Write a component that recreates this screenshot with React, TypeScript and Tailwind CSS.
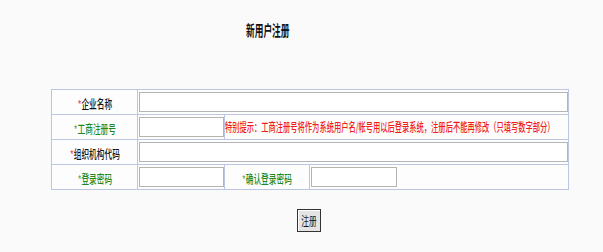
import React from 'react';

// Registration form: labels in a bordered table, squeezed CJK text
const font = "font-['SimSun','Noto_Sans_CJK_SC',sans-serif]";

function Label({ text, green }: { text: string; green?: boolean }) {
  return (
    <span className={`inline-block scale-x-[0.64] whitespace-nowrap text-[12px] leading-[14px] font-medium ${green ? 'text-[#1e8a1e]' : 'text-[#111]'}`}>
      <span className={green ? 'text-[#6cab6c]' : 'text-[#e8506e]'}>*</span>
      {text}
    </span>
  );
}

const cell = 'border border-[#bac6e2] p-0 align-middle';

export default function App() {
  return (
    <div className={`w-[603px] h-[252px] bg-[#fafafa] pt-[20px] ${font}`}>
      {/* Title */}
      <div className="h-5 ml-[246px] text-[15px] leading-5 font-bold text-[#111]">
        <span className="inline-block origin-left scale-x-[0.58] whitespace-nowrap">新用户注册</span>
      </div>

      {/* Form table */}
      <table className="mt-[49px] ml-[51px] w-[518px] border-collapse bg-[#fdfdfd] table-fixed">
        <colgroup>
          <col className="w-[86px]" />
          <col className="w-[87px]" />
          <col className="w-[85px]" />
          <col />
        </colgroup>
        <tbody>
          <tr className="h-[24px]">
            <td className={`${cell} text-center`}>
              <Label text="企业名称" />
            </td>
            <td className={cell} colSpan={3}>
              <input className="block ml-[1px] w-[429px] h-[20px] border border-[#b4b4b4] bg-white" />
            </td>
          </tr>
          <tr className="h-[24px]">
            <td className={`${cell} text-center`}>
              <Label text="工商注册号" green />
            </td>
            <td className={cell}>
              <input className="block ml-[1px] w-[85px] h-[20px] border border-[#b4b4b4] bg-white" />
            </td>
            <td className={cell} colSpan={2}>
              <span className="block origin-left scale-x-[0.605] whitespace-nowrap text-[12px] leading-[14px] font-medium text-[#f01c1c]">
                特别提示：工商注册号将作为系统用户名/帐号用以后登录系统，注册后不能再修改（只填写数字部分）
              </span>
            </td>
          </tr>
          <tr className="h-[24px]">
            <td className={`${cell} text-center`}>
              <Label text="组织机构代码" />
            </td>
            <td className={cell} colSpan={3}>
              <input className="block ml-[1px] w-[429px] h-[20px] border border-[#b4b4b4] bg-white" />
            </td>
          </tr>
          <tr className="h-[24px]">
            <td className={`${cell} text-center`}>
              <Label text="登录密码" green />
            </td>
            <td className={cell}>
              <input className="block ml-[1px] w-[85px] h-[20px] border border-[#b4b4b4] bg-white" />
            </td>
            <td className={`${cell} text-center`}>
              <Label text="确认登录密码" green />
            </td>
            <td className={cell}>
              <input className="block ml-[1px] w-[86px] h-[20px] border border-[#b4b4b4] bg-white" />
            </td>
          </tr>
        </tbody>
      </table>

      {/* Submit */}
      <button className="mt-[19px] ml-[297px] flex h-[23px] w-[24px] items-center justify-center border border-[#333] bg-[#e4e4e4] text-[12px] text-[#111] shadow-[inset_1px_1px_0_#fff]">
        <span className="inline-block scale-x-[0.64] whitespace-nowrap">注册</span>
      </button>
    </div>
  );
}
